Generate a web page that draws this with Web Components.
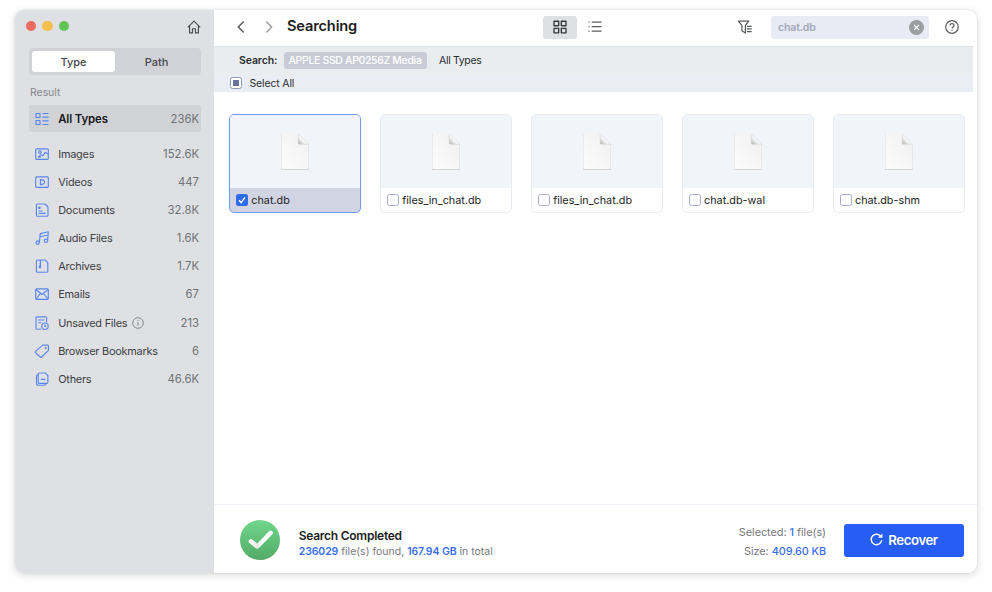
<!DOCTYPE html>
<html lang="en">
<head>
<meta charset="utf-8">
<title>Searching</title>
<style>
  body {
    margin: 0;
    width: 992px;
    height: 592px;
    overflow: hidden;
    background: #fff;
    font-family: "Inter", sans-serif;
    font-size: 11px;
    color: #1f2023;
  }
</style>
</head>
<body>
<recovery-app></recovery-app>

<script>
const ICONS = {
  home: `<path d="M.8 7.3 7 1.2l6.2 6.1M2.6 5.8v7.1h2.9V8.7h3v4.2h2.9V5.8"/>`,
  types: `<path d="M1 1.500h4v4H1zM1 8.500h4v4H1zM7.500 1.500H13.500M7.500 5.100H13.500M7.500 8.900H13.500M7.500 12.500H13.500"/>`,
  images: `<rect x=".7" y="1.8" width="12.6" height="10.6" rx="1"/><circle cx="4.9" cy="5" r="1.3"/><path d="M3 10.2 6 7.6l1.7 1.2 2.6-3.4 2.9 1.5M3.5 10.3l2.8-.3"/>`,
  videos: `<rect x=".7" y="1.8" width="12.6" height="10.6" rx="1"/><path d="M5.4 4.6v5c2.3 0 4.2-.9 4.2-2.5s-1.9-2.5-4.2-2.5z"/>`,
  documents: `<path d="M2.4 1h7.6l3 3v8.2a1 1 0 0 1-1 1H2.4a1 1 0 0 1-1-1V2a1 1 0 0 1 1-1zM3.5 8h4M3.5 10.4h7.2"/><circle cx="4.4" cy="4.7" r=".7" fill="currentColor"/>`,
  audio: `<circle cx="2.7" cy="11.6" r="1.7"/><circle cx="10.9" cy="9.8" r="1.7"/><path d="M4.4 11.6 5.3 2.6l8-1.8-.7 9M5 5.7l8-1.7"/>`,
  archives: `<path d="M2.4 1h7.7l2.7 2.6v8.6a1 1 0 0 1-1 1H2.4a1 1 0 0 1-1-1V2a1 1 0 0 1 1-1z"/><path d="M5.500 1v6.500M4.500 2.300h1M4.500 4.600h1M4.500 6.800h1v1.900h-1z"/>`,
  emails: `<rect x=".7" y="1.8" width="12.6" height="10.6" rx="1"/><path d="m1.1 2.5 5.9 5 5.9-5M1.2 12l4.2-5.500M12.8 12 8.6 6.500"/>`,
  unsaved: `<path d="M6.2 13.2H2a1 1 0 0 1-1-1V1.8a1 1 0 0 1 1-1h8.6a1 1 0 0 1 1 1v4.4M3.2 4h6.2M3.2 6.7h3.3"/><circle cx="10" cy="10.2" r="3.2"/><path d="M9.9 8.6v1.8h1.4"/>`,
  bookmarks: `<path d="M7.8 1.1h4.8a.9.9 0 0 1 .9.9v4.3L6.7 13a1 1 0 0 1-1.4 0L.5 8.7a1 1 0 0 1 0-1.3z"/><circle cx="10.7" cy="4" r=".5"/>`,
  others: `<path d="M4.2 1h6.1l2.6 2.5v6.8a1 1 0 0 1-1 1H4.2a1 1 0 0 1-1-1V2a1 1 0 0 1 1-1zM3.2 2.6a1.8 1.8 0 0 0-1.7 1.8v6.8a2 2 0 0 0 2 2h5.8a1.8 1.8 0 0 0 1.7-1.5M5.8 7.3h4.4"/>`,
  info: `<circle cx="7" cy="7" r="6.2"/><path d="M7 6.2v4M7 3.6v1"/>`,
  back: `<path d="M9.700 1.500 4.300 7l5.400 5.500"/>`,
  forward: `<path d="M4.300 1.500 9.700 7l-5.400 5.500"/>`,
  grid: `<path d="M1 1.2h4.7v4.5H1zM8.3 1.2H13v4.5H8.3zM1 8.3h4.7v4.5H1zM8.3 8.3H13v4.5H8.3z"/>`,
  list: `<path d="M3.7 2.2h9.8M3.7 6.7h9.8M3.7 11.2h9.8M.4 2.2h1.1M.4 6.7h1.1M.4 11.2h1.1"/>`,
  filter: `<path d="M.4 1.1h10.4L7.4 5.3v7.8L3.9 10.7V5.3zM9 6.3h4.7M9 8.9h4.7M9 11.5h4.7"/>`,
  help: `<circle cx="7" cy="7" r="6.3"/><path d="M5 5.5c0-2.6 4-2.4 4 0C9 6.9 7 7 7 8.6M7 9.7v1.2"/>`,
  reload: `<path d="M12 4.2A5.7 5.7 0 1 0 12.6 8"/><path d="m8.6 5 4.8.2V.6z" fill="currentColor" stroke="none"/>`,
};

class AppIcon extends HTMLElement {
  connectedCallback() {
    const size = this.getAttribute('size') || 14;
    const stroke = this.getAttribute('stroke') || 1.15;
    this.attachShadow({ mode: 'open' }).innerHTML = `
      <style>
        :host { display: block; flex: none; width: ${size}px; height: ${size}px; }
        svg { display: block; overflow: visible; }
      </style>
      <svg width="${size}" height="${size}" viewBox="0 0 14 14" fill="none" stroke="currentColor"
        stroke-width="${stroke}" stroke-linejoin="round">${ICONS[this.getAttribute('name')]}</svg>
    `;
  }
}
customElements.define('app-icon', AppIcon);

class CheckBox extends HTMLElement {
  connectedCallback() {
    const state = this.getAttribute('state');
    let mark = '';
    if (state === 'checked') {
      mark = '<svg width="12" height="12" viewBox="0 0 12 12"><path d="m3 6.3 2.1 2.3L9 3.4" fill="none" stroke="#fff" stroke-width="1.4"/></svg>';
    } else if (state === 'mixed') {
      mark = '<i></i>';
    }
    this.attachShadow({ mode: 'open' }).innerHTML = `
      <style>
        :host {
          display: flex;
          flex: none;
          align-items: center;
          justify-content: center;
          box-sizing: border-box;
          width: 12px;
          height: 12px;
          border: 1px solid #a3adc5;
          border-radius: 2.5px;
          background: #fff;
        }
        :host([state="checked"]) { border: none; background: #2f6cea; }
        :host([state="mixed"]) { border-color: #8f9bb8; }
        i { width: 6px; height: 6px; background: #65749b; }
      </style>
      ${mark}
    `;
  }
}
customElements.define('check-box', CheckBox);

class SideItem extends HTMLElement {
  connectedCallback() {
    this.attachShadow({ mode: 'open' }).innerHTML = `
      <style>
        :host {
          display: flex;
          align-items: center;
          box-sizing: border-box;
          height: 28.15px;
          padding: 0 2px 0 6px;
          font-size: 10.9px;
          letter-spacing: -.22px;
          color: #3f4145;
        }
        :host([active]) {
          height: 27px;
          margin-bottom: 7.7px;
          border-radius: 3px;
          background: #d0d2d6;
          font-size: 11.4px;
          letter-spacing: -.12px;
        }
        :host([active]) .label { color: #17181a; font-weight: 600; }
        app-icon { color: #5a86f5; margin-right: 9.2px; }
        .label { display: flex; align-items: center; gap: 4.5px; }
        .label app-icon { color: #85878b; margin: 0; }
        .count { margin-left: auto; color: #707277; font-size: 11.3px; letter-spacing: 0; }
      </style>
      <app-icon name="${this.getAttribute('icon')}"></app-icon>
      <span class="label"><slot></slot>${this.hasAttribute('info') ? '<app-icon name="info" size="12"></app-icon>' : ''}</span>
      <span class="count">${this.getAttribute('count')}</span>
    `;
  }
}
customElements.define('side-item', SideItem);

class SideBar extends HTMLElement {
  constructor() {
    super();
    this.attachShadow({ mode: 'open' });
  }

  connectedCallback() {
    this.items = [
      { icon: 'types', text: 'All Types', count: '236K', active: true },
      { icon: 'images', text: 'Images', count: '152.6K' },
      { icon: 'videos', text: 'Videos', count: '447' },
      { icon: 'documents', text: 'Documents', count: '32.8K' },
      { icon: 'audio', text: 'Audio Files', count: '1.6K' },
      { icon: 'archives', text: 'Archives', count: '1.7K' },
      { icon: 'emails', text: 'Emails', count: '67' },
      { icon: 'unsaved', text: 'Unsaved Files', count: '213', info: true },
      { icon: 'bookmarks', text: 'Browser Bookmarks', count: '6' },
      { icon: 'others', text: 'Others', count: '46.6K' },
    ];
    this.render();
  }

  render() {
    this.shadowRoot.innerHTML = `
      <style>
        :host {
          display: flex;
          flex-direction: column;
          box-sizing: border-box;
          padding: 0 13px 0 14px;
          background: #dee0e4;
        }
        .top { display: flex; align-items: center; height: 32px; margin-left: -3.5px; gap: 6px; }
        .light { width: 10.5px; height: 10.5px; border-radius: 50%; }
        .red { background: #ed6a5e; }
        .yellow { background: #f5bf4f; }
        .green { background: #61c554; }
        .top app-icon { margin: 2px 0 0 auto; color: #4b4d52; }
        .segment {
          display: grid;
          grid-template-columns: 83px 1fr;
          box-sizing: border-box;
          height: 27px;
          margin-top: 6px;
          padding: 3px;
          border-radius: 4px;
          background: #d1d2d8;
          font-size: 11px;
          font-weight: 500;
          line-height: 22px;
          text-align: center;
          color: #45474b;
        }
        .segment .on { height: 21px; border-radius: 3px; background: #fff; }
        h4 { margin: 11px 0 5px 1px; font-size: 10.5px; font-weight: 400; line-height: 14px; letter-spacing: -.05px; color: #85878c; }
      </style>
      <div class="top">
        <span class="light red"></span><span class="light yellow"></span><span class="light green"></span>
        <app-icon name="home"></app-icon>
      </div>
      <div class="segment"><span class="on">Type</span><span>Path</span></div>
      <h4>Result</h4>
      ${this.items.map(item => `<side-item icon="${item.icon}" count="${item.count}" ${item.active ? 'active' : ''} ${item.info ? 'info' : ''}>${item.text}</side-item>`).join('')}
    `;
  }
}
customElements.define('side-bar', SideBar);

class ToolBar extends HTMLElement {
  connectedCallback() {
    this.attachShadow({ mode: 'open' }).innerHTML = `
      <style>
        :host {
          display: flex;
          align-items: center;
          box-sizing: border-box;
          height: 36px;
          padding: 0 18px 2px 20px;
          color: #5b5d61;
        }
        h1 { margin: 0 0 2px 11px; width: 256px; font-size: 14.6px; font-weight: 600; line-height: 20px; letter-spacing: -.15px; color: #1d1e22; }
        .forward { margin-left: 14px; color: #a0a1a4; }
        .view { display: flex; align-items: center; justify-content: center; width: 34px; height: 23px; border-radius: 3px; background: #dfe0e4; color: #393a3e; }
        .list { margin-left: 11px; }
        .filter { margin-left: auto; }
        .search {
          display: flex;
          align-items: center;
          justify-content: space-between;
          box-sizing: border-box;
          width: 158px;
          height: 23px;
          margin: 0 16px 0 19px;
          padding: 0 5px 0 7px;
          border-radius: 3px;
          background: #e8ebf4;
          color: #a2a8b9;
          font-size: 10.6px;
          font-weight: 600;
          letter-spacing: -.2px;
        }
      </style>
      <app-icon name="back" stroke="1.5"></app-icon>
      <app-icon class="forward" name="forward" stroke="1.5"></app-icon>
      <h1>Searching</h1>
      <span class="view"><app-icon name="grid" stroke="1.35"></app-icon></span>
      <app-icon class="list" name="list" stroke="1.2"></app-icon>
      <app-icon class="filter" name="filter" stroke="1.25"></app-icon>
      <div class="search">
        <span>chat.db</span>
        <svg width="15" height="15" viewBox="0 0 15 15"><circle cx="7.5" cy="7.5" r="7.5" fill="#9b9da1"/><path d="m5 5 5 5M10 5l-5 5" stroke="#fff" stroke-width="1.1"/></svg>
      </div>
      <app-icon name="help" stroke="1.2"></app-icon>
    `;
  }
}
customElements.define('tool-bar', ToolBar);

class SearchPath extends HTMLElement {
  connectedCallback() {
    this.attachShadow({ mode: 'open' }).innerHTML = `
      <style>
        :host { display: block; margin-right: 4px; font-size: 10.5px; color: #2b2d31; }
        .crumbs, .select { display: flex; align-items: center; box-sizing: border-box; }
        .crumbs { height: 28px; padding: 0 0 1px 25px; border-top: 1px solid #dfe2e5; background: #e9edf0; letter-spacing: -.34px; }
        .select { height: 18px; padding-left: 16px; gap: 7.5px; background: #eaeef4; letter-spacing: -.15px; }
        b { width: 44.5px; font-weight: 600; letter-spacing: -.1px; }
        .disk { margin-right: 12.5px; padding: 0 5px; border-radius: 3px; background: #c9cbd7; color: #fff; line-height: 17px; font-weight: 500; }
      </style>
      <div class="crumbs"><b>Search:</b><span class="disk">APPLE SSD AP0256Z Media</span><span>All Types</span></div>
      <div class="select"><check-box state="mixed"></check-box><span>Select All</span></div>
    `;
  }
}
customElements.define('search-path', SearchPath);

class FileCard extends HTMLElement {
  connectedCallback() {
    const checked = this.hasAttribute('checked');
    this.attachShadow({ mode: 'open' }).innerHTML = `
      <style>
        :host {
          display: flex;
          flex-direction: column;
          box-sizing: border-box;
          height: 99px;
          overflow: hidden;
          border: 1px solid #e7eaf1;
          border-radius: 5px;
          background: #fff;
        }
        :host([checked]) { border-color: #7199f3; background: #d1d5e3; }
        .preview { display: flex; justify-content: center; height: 73px; background: #f1f4f8; }
        .preview svg { margin-top: 18px; overflow: visible; }
        .name { display: flex; flex: 1; align-items: center; gap: 3px; padding-left: 6px; font-size: 10.8px; color: #1c1e22; }
      </style>
      <div class="preview">
        <svg width="28" height="37" viewBox="0 0 28 37">
          <defs>
            <linearGradient id="page" x1="0" y1="1" x2="1" y2="0"><stop offset="0" stop-color="#fcfcfc"/><stop offset="1" stop-color="#f0f0f0"/></linearGradient>
            <linearGradient id="fold" x1="0" y1="1" x2="1" y2="0"><stop offset="0" stop-color="#aaa"/><stop offset=".3" stop-color="#e6e6e6"/><stop offset=".5" stop-color="#fff"/></linearGradient>
          </defs>
          <path d="M0 1h17.5L28 11.5V37H0z" fill="#c9cacc"/>
          <path d="M.3.8h16.9L27.7 11.3v24.9H.3z" fill="url(#page)"/>
          <path d="M17.2.8v9.5a1 1 0 0 0 1 1h9.5z" fill="url(#fold)" stroke="#cfcfcf" stroke-width=".5"/>
        </svg>
      </div>
      <div class="name"><check-box ${checked ? 'state="checked"' : ''}></check-box><slot></slot></div>
    `;
  }
}
customElements.define('file-card', FileCard);

class StatusBar extends HTMLElement {
  connectedCallback() {
    this.attachShadow({ mode: 'open' }).innerHTML = `
      <style>
        :host {
          display: flex;
          align-items: center;
          box-sizing: border-box;
          height: 69px;
          padding: 2px 13px 0 26px;
          border-top: 1px solid #ecf2f8;
          font-size: 10.5px;
          line-height: 16px;
          color: #77797e;
        }
        .done { flex: none; margin-right: 18.7px; }
        h2 { margin: 6px 0 0; font-size: 12px; font-weight: 600; line-height: 17px; letter-spacing: -.25px; color: #1d1e22; }
        p { margin: 0; }
        em { font-style: normal; font-weight: 600; letter-spacing: -.1px; color: #3c6ef0; }
        .selected { margin: 4px 18px 0 auto; text-align: right; line-height: 19px; font-size: 10.9px; }
        .selected p { letter-spacing: -.05px; }
        .selected em { font-weight: 500; }
        button {
          display: flex;
          align-items: center;
          justify-content: center;
          gap: 5px;
          width: 120px;
          height: 33px;
          padding: 0 0 1px;
          border: none;
          border-radius: 3px;
          background: #275df2;
          color: #fff;
          font: 600 13.2px "Inter", sans-serif;
          letter-spacing: -.4px;
        }
      </style>
      <svg class="done" width="40" height="40" viewBox="0 0 40 40">
        <defs>
          <linearGradient id="green" x1="0" y1="0" x2="0" y2="1"><stop offset="0" stop-color="#70d78a"/><stop offset="1" stop-color="#52aa66"/></linearGradient>
          <linearGradient id="tick" x1="0" y1="0" x2="1" y2="0"><stop offset="0" stop-color="#fff"/><stop offset=".35" stop-color="#e4e8e5"/><stop offset=".6" stop-color="#fff"/></linearGradient>
        </defs>
        <circle cx="20" cy="20" r="20" fill="url(#green)"/>
        <path d="m11 21.5 6.3 5L30.5 13" fill="none" stroke="url(#tick)" stroke-width="4.6" stroke-linecap="round" stroke-linejoin="round"/>
      </svg>
      <div>
        <h2>Search Completed</h2>
        <p><em>236029</em> file(s) found, <em>167.94 GB</em> in total</p>
      </div>
      <div class="selected">
        <p>Selected: <em>1</em> file(s)</p>
        <p>Size: <em>409.60 KB</em></p>
      </div>
      <button><app-icon name="reload" size="13" stroke="1.6"></app-icon>Recover</button>
    `;
  }
}
customElements.define('status-bar', StatusBar);

class RecoveryApp extends HTMLElement {
  connectedCallback() {
    this.attachShadow({ mode: 'open' }).innerHTML = `
      <style>
        :host {
          display: grid;
          grid-template-columns: 199px 1fr;
          width: 962px;
          height: 563px;
          margin: 10px 0 0 15px;
          overflow: hidden;
          border-radius: 9px;
          background: #fff;
          box-shadow: 0 2px 9px rgba(0, 0, 0, .15), 0 0 2px rgba(0, 0, 0, .12);
        }
        main { display: flex; flex-direction: column; min-width: 0; }
        .files {
          display: grid;
          grid-template-columns: repeat(5, 132px);
          justify-content: space-between;
          align-content: start;
          flex: 1;
          padding: 22px 12px 0 15.3px;
        }
      </style>
      <side-bar></side-bar>
      <main>
        <tool-bar></tool-bar>
        <search-path></search-path>
        <div class="files">
          <file-card checked>chat.db</file-card>
          <file-card>files_in_chat.db</file-card>
          <file-card>files_in_chat.db</file-card>
          <file-card>chat.db-wal</file-card>
          <file-card>chat.db-shm</file-card>
        </div>
        <status-bar></status-bar>
      </main>
    `;
  }
}
customElements.define('recovery-app', RecoveryApp);
</script>
</body>
</html>
